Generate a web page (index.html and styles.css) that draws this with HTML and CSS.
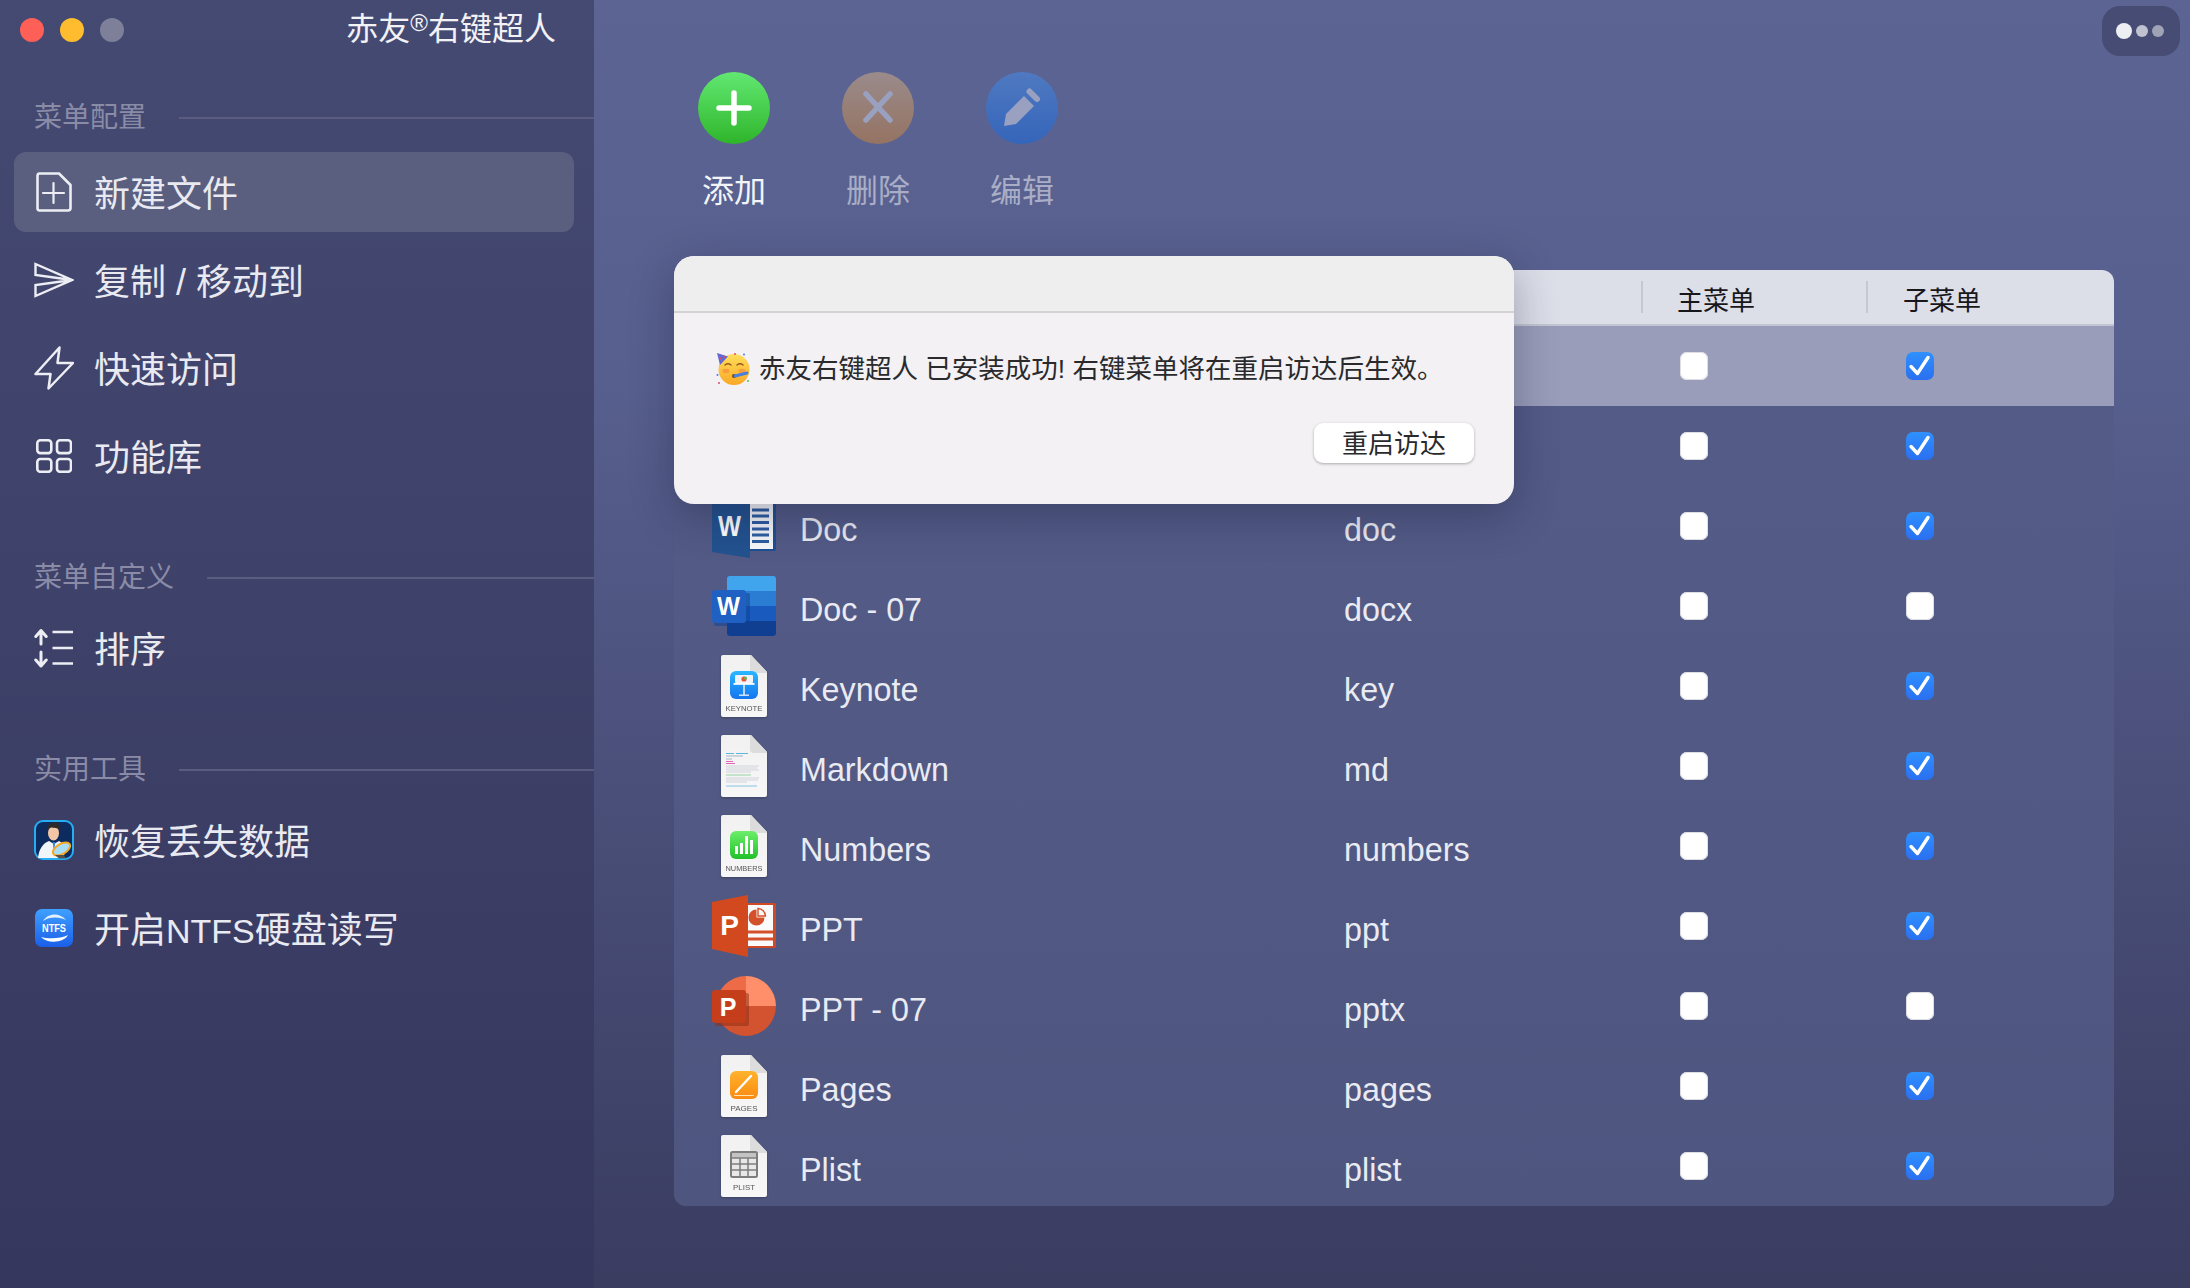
FILE: index.html
```html
<!DOCTYPE html>
<html lang="zh-CN">
<head>
<meta charset="utf-8">
<title>赤友右键超人</title>
<link rel="stylesheet" href="styles.css">
</head>
<body>
<svg class="defs" width="0" height="0" aria-hidden="true">
  <defs>
    <linearGradient id="pageFill" x1="0" y1="0" x2="0" y2="1"><stop offset="0" stop-color="#f1f1f1"/><stop offset="1" stop-color="#f7f7f7"/></linearGradient>
    <linearGradient id="kBlue" x1="0" y1="0" x2="0" y2="1"><stop offset="0" stop-color="#2ab8ff"/><stop offset="1" stop-color="#1474f0"/></linearGradient>
    <linearGradient id="nGreen" x1="0" y1="0" x2="0" y2="1"><stop offset="0" stop-color="#6cee6a"/><stop offset="1" stop-color="#22c12a"/></linearGradient>
    <linearGradient id="pOrange" x1="0" y1="0" x2="0" y2="1"><stop offset="0" stop-color="#ffb32c"/><stop offset="1" stop-color="#fb8a12"/></linearGradient>
    <linearGradient id="ntfsBlue" x1="0" y1="0" x2="0" y2="1"><stop offset="0" stop-color="#3fa0ff"/><stop offset="1" stop-color="#1a5fe8"/></linearGradient>
    <linearGradient id="faceFill" x1="0" y1="0" x2="0" y2="1"><stop offset="0" stop-color="#ffdf5c"/><stop offset="1" stop-color="#f9a825"/></linearGradient>
    <symbol id="page" viewBox="0 0 46 62">
      <path d="M2 0H30L46 17V60Q46 62 44 62H2Q0 62 0 60V2Q0 0 2 0Z" fill="url(#pageFill)"/>
      <path d="M29 0H30L46 17V18H33Q29 18 29 14Z" fill="#dcdcdc"/>
    </symbol>
    <symbol id="tick" viewBox="0 0 28 28">
      <path d="M5 14.5L11.5 21.5L22 5.5" fill="none" stroke="#fff" stroke-width="3.4" stroke-linecap="round" stroke-linejoin="round"/>
    </symbol>
  </defs>
</svg>
<div class="app">
  <aside class="sidebar">
    <div class="titlebar">
      <div class="lights">
        <span class="light light-red"></span>
        <span class="light light-yellow"></span>
        <span class="light light-gray"></span>
      </div>
      <div class="app-title">赤友<span class="reg">®</span>右键超人</div>
    </div>

    <section class="group group-first">
      <div class="group-label"><span class="group-text">菜单配置</span><i class="rule"></i></div>
      <nav class="nav">
        <a class="item item-active">
          <span class="item-icon">
            <svg width="36" height="40" viewBox="0 0 36 40" fill="none" stroke="#eceef4" stroke-width="2.600" stroke-linejoin="round" stroke-linecap="round"><path d="M3.500 1.500H23L34.500 13V36Q34.500 38.500 32 38.500H3.500Q1.500 38.500 1.500 36V4Q1.500 1.500 3.500 1.500Z"/><path d="M17.500 11V31M7 21H28" stroke-width="2.200"/></svg>
          </span>
          <span class="item-text">新建文件</span>
        </a>
        <a class="item">
          <span class="item-icon">
            <svg width="40" height="36" viewBox="0 0 40 36" fill="none" stroke="#eceef4" stroke-width="2.400" stroke-linejoin="miter"><path d="M1.500 2L38 18L1.500 34V23L38 18L1.500 13Z"/></svg>
          </span>
          <span class="item-text">复制 / 移动到</span>
        </a>
        <a class="item">
          <span class="item-icon">
            <svg width="40" height="44" viewBox="0 0 40 44" fill="none" stroke="#eceef4" stroke-width="2.500" stroke-linejoin="round"><path d="M25.500 1.500L1.500 28H16.500L14.500 42.500L39 17H23.500Z"/></svg>
          </span>
          <span class="item-text">快速访问</span>
        </a>
        <a class="item">
          <span class="item-icon">
            <svg width="36" height="34" viewBox="0 0 36 34" fill="none" stroke="#eceef4" stroke-width="2.600"><rect x="1.300" y="1.300" width="14" height="12.800" rx="3"/><rect x="21" y="1.300" width="14" height="12.800" rx="3"/><rect x="1.300" y="20" width="14" height="12.800" rx="3"/><rect x="21" y="20" width="14" height="12.800" rx="3"/></svg>
          </span>
          <span class="item-text">功能库</span>
        </a>
      </nav>
    </section>

    <section class="group">
      <div class="group-label"><span class="group-text">菜单自定义</span><i class="rule"></i></div>
      <nav class="nav">
        <a class="item">
          <span class="item-icon">
            <svg width="40" height="40" viewBox="0 0 40 40" fill="none" stroke="#eceef4" stroke-width="3" stroke-linecap="round" stroke-linejoin="round"><path d="M7 3V16M1.800 8.500L7 2.500L12.200 8.500M7 24V38M1.800 32L7 38L12.200 32"/><path d="M18.500 4H39M18.500 20H39M18.500 35.500H39" stroke-linecap="butt" stroke-width="2.400"/></svg>
          </span>
          <span class="item-text">排序</span>
        </a>
      </nav>
    </section>

    <section class="group">
      <div class="group-label"><span class="group-text">实用工具</span><i class="rule"></i></div>
      <nav class="nav">
        <a class="item">
          <span class="item-icon">
            <svg width="40" height="40" viewBox="0 0 40 40">
              <rect x="1" y="1" width="38" height="38" rx="8" fill="#0d2b5e" stroke="#25aef2" stroke-width="2"/>
              <path d="M4 38C5 29 9 23 15 21L20 24L25 21C29 23 32 26 33 30L28 38Z" fill="#f1f4f8"/>
              <path d="M18.800 22L20 33L21.200 22Z" fill="#2f7fd6"/>
              <ellipse cx="19.500" cy="13" rx="5.500" ry="7.500" fill="#f3c6a6"/>
              <path d="M13 12C11.500 5 17 1.500 22 2C27 2.500 27.500 8 26 11C24.500 7.500 21 8.500 18 7.500C15.500 7.500 14.500 9 13 12Z" fill="#2b2a2d"/>
              <ellipse cx="27.500" cy="29" rx="9.500" ry="5" transform="rotate(-30 27.500 29)" fill="#a9dcf5" stroke="#f5a623" stroke-width="2"/>
              <path d="M21 35L25 38.500H32L30 35Z" fill="#55504c"/>
            </svg>
          </span>
          <span class="item-text">恢复丢失数据</span>
        </a>
        <a class="item">
          <span class="item-icon">
            <svg width="38" height="38" viewBox="0 0 38 38">
              <rect width="38" height="38" rx="7" fill="url(#ntfsBlue)"/>
              <path d="M8 12C13 3.500 25 3.500 31 11C25 7.500 14 7.500 8 12Z" fill="#fff" opacity=".85"/>
              <text class="ntfs-text" x="19" y="22.500" text-anchor="middle" textLength="24" lengthAdjust="spacingAndGlyphs">NTFS</text>
              <path d="M6 28C12 30 26 30 33 26C29 34 12 35 6 28Z" fill="#fff"/>
            </svg>
          </span>
          <span class="item-text">开启<span class="latin-tight">NTFS</span>硬盘读写</span>
        </a>
      </nav>
    </section>
  </aside>

  <main class="main">
    <div class="topbar">
      <button class="more">
        <i class="dot dot-a"></i><i class="dot dot-b"></i><i class="dot dot-c"></i>
      </button>
    </div>

    <div class="toolbar">
      <div class="tool">
        <span class="tool-circle circle-add">
          <svg width="72" height="72" viewBox="0 0 72 72" fill="none" stroke="#fff" stroke-width="5.500" stroke-linecap="round"><path d="M36 21V51M21 36H51"/></svg>
        </span>
        <span class="tool-label">添加</span>
      </div>
      <div class="tool tool-off">
        <span class="tool-circle circle-del">
          <svg width="72" height="72" viewBox="0 0 72 72" fill="none" stroke="#9aa0c0" stroke-width="5.500" stroke-linecap="round"><path d="M24 22L48 48M48 22L24 48"/></svg>
        </span>
        <span class="tool-label">删除</span>
      </div>
      <div class="tool tool-off">
        <span class="tool-circle circle-edit">
          <svg width="72" height="72" viewBox="0 0 72 72"><path d="M18 54L20 42L38 24L48 34L30 52Z" fill="#9aa0c0"/><path d="M43.500 19.500L51 27" stroke="#9aa0c0" stroke-width="6" stroke-linecap="round"/></svg>
        </span>
        <span class="tool-label">编辑</span>
      </div>
    </div>

    <div class="table">
      <div class="row-head">
        <div></div><div></div>
        <div class="th">主菜单</div>
        <div class="th th-last">子菜单</div>
      </div>

      <div class="row row-selected">
        <div class="name"></div><div class="ext"></div>
        <div class="chk-cell"><span class="chk"></span></div>
        <div class="chk-cell chk-cell-last"><span class="chk chk-on"><svg width="28" height="28"><use href="#tick"/></svg></span></div>
      </div>
      <div class="row">
        <div class="name"></div><div class="ext"></div>
        <div class="chk-cell"><span class="chk"></span></div>
        <div class="chk-cell chk-cell-last"><span class="chk chk-on"><svg width="28" height="28"><use href="#tick"/></svg></span></div>
      </div>

      <div class="row">
        <div class="name">
          <span class="file-icon"><svg width="64" height="64" viewBox="0 0 64 64">
            <path d="M36 7H62Q64 7 64 9V55Q64 57 62 57H36Z" fill="#1f4f94"/>
            <rect x="38" y="9" width="23" height="46" fill="#f6f7fa"/>
            <path d="M40 16H57M40 22H57M40 28.500H57M40 35H57M40 41H57M40 47.500H57" stroke="#2d5da3" stroke-width="2.800"/>
            <path d="M0 7L38 0V64L0 58Z" fill="#23528f"/>
            <text class="office-letter letter-w" x="17.500" y="42" text-anchor="middle" textLength="23" lengthAdjust="spacingAndGlyphs">W</text>
          </svg></span>
          <span class="cell-text">Doc</span>
        </div>
        <div class="ext"><span class="cell-text">doc</span></div>
        <div class="chk-cell"><span class="chk"></span></div>
        <div class="chk-cell chk-cell-last"><span class="chk chk-on"><svg width="28" height="28"><use href="#tick"/></svg></span></div>
      </div>

      <div class="row">
        <div class="name">
          <span class="file-icon"><svg width="64" height="64" viewBox="0 0 64 64">
            <path d="M15 5Q15 2 18 2H61Q64 2 64 5V17H15Z" fill="#41a5ee"/>
            <rect x="15" y="17" width="49" height="15" fill="#2b7cd3"/>
            <rect x="15" y="32" width="49" height="15" fill="#185abd"/>
            <path d="M15 47H64V59Q64 62 61 62H18Q15 62 15 59Z" fill="#103f91"/>
            <rect x="2" y="19" width="36" height="33" rx="2" fill="#103f91" opacity=".5"/>
            <rect y="16" width="34" height="33" rx="3" fill="#1f60c2"/>
            <text class="office-letter letter-sm" x="16.500" y="41" text-anchor="middle" textLength="23" lengthAdjust="spacingAndGlyphs">W</text>
          </svg></span>
          <span class="cell-text">Doc - 07</span>
        </div>
        <div class="ext"><span class="cell-text">docx</span></div>
        <div class="chk-cell"><span class="chk"></span></div>
        <div class="chk-cell chk-cell-last"><span class="chk"></span></div>
      </div>

      <div class="row">
        <div class="name">
          <span class="file-icon"><svg class="page-svg" width="46" height="62" viewBox="0 0 46 62">
            <use href="#page"/>
            <rect x="9" y="16" width="28" height="28" rx="6" fill="url(#kBlue)"/>
            <rect x="14" y="20" width="18" height="8" rx="1" fill="#f0f3f6"/>
            <circle cx="23" cy="24" r="2.600" fill="#e8553e"/>
            <circle cx="24.500" cy="23" r="1.500" fill="#5bbf4a"/>
            <rect x="12.500" y="28" width="21" height="1.800" fill="#fff"/>
            <rect x="22.200" y="29" width="1.600" height="11" fill="#dfeafa"/>
            <rect x="18" y="39.500" width="10" height="1.400" fill="#dfeafa"/>
            <text class="page-label" x="23" y="55.500" text-anchor="middle" textLength="37" lengthAdjust="spacingAndGlyphs">KEYNOTE</text>
          </svg></span>
          <span class="cell-text">Keynote</span>
        </div>
        <div class="ext"><span class="cell-text">key</span></div>
        <div class="chk-cell"><span class="chk"></span></div>
        <div class="chk-cell chk-cell-last"><span class="chk chk-on"><svg width="28" height="28"><use href="#tick"/></svg></span></div>
      </div>

      <div class="row">
        <div class="name">
          <span class="file-icon"><svg class="page-svg" width="46" height="62" viewBox="0 0 46 62">
            <use href="#page"/>
            <path d="M5 18.500H13M15 18.500H27" stroke="#35a8d8" stroke-width=".8"/>
            <path d="M5 21H22M5 24H11" stroke="#8a9bb0" stroke-width=".7"/>
            <path d="M5 26.500H12M5 28.500H14" stroke="#e23fa5" stroke-width=".8"/>
            <path d="M5 31H38M5 33H36M5 35H38M5 37H30" stroke="#c2c5ce" stroke-width=".7"/>
            <path d="M5 40H30" stroke="#7fc98a" stroke-width=".8"/>
            <path d="M5 43H38M5 45H37M5 47H26" stroke="#c2c5ce" stroke-width=".7"/>
            <path d="M5 51H36" stroke="#6fb8e0" stroke-width=".8"/>
          </svg></span>
          <span class="cell-text">Markdown</span>
        </div>
        <div class="ext"><span class="cell-text">md</span></div>
        <div class="chk-cell"><span class="chk"></span></div>
        <div class="chk-cell chk-cell-last"><span class="chk chk-on"><svg width="28" height="28"><use href="#tick"/></svg></span></div>
      </div>

      <div class="row">
        <div class="name">
          <span class="file-icon"><svg class="page-svg" width="46" height="62" viewBox="0 0 46 62">
            <use href="#page"/>
            <rect x="9" y="16" width="28" height="28" rx="6" fill="url(#nGreen)"/>
            <path d="M14 31h3v8h-3zM19 28h3v11h-3zM24 21h3v18h-3zM29 25h3v14h-3z" fill="#fff"/>
            <text class="page-label" x="23" y="55.500" text-anchor="middle" textLength="37" lengthAdjust="spacingAndGlyphs">NUMBERS</text>
          </svg></span>
          <span class="cell-text">Numbers</span>
        </div>
        <div class="ext"><span class="cell-text">numbers</span></div>
        <div class="chk-cell"><span class="chk"></span></div>
        <div class="chk-cell chk-cell-last"><span class="chk chk-on"><svg width="28" height="28"><use href="#tick"/></svg></span></div>
      </div>

      <div class="row">
        <div class="name">
          <span class="file-icon"><svg width="64" height="64" viewBox="0 0 64 64">
            <path d="M36 9H62Q64 9 64 11V52Q64 54 62 54H36Z" fill="#cf4a24"/>
            <rect x="36" y="11" width="25" height="41" fill="#fafafa"/>
            <path d="M44.500 15.500A8 8 0 1 0 52.500 23.500H44.500Z" fill="#d4502a"/>
            <path d="M46 14.500A8 8 0 0 1 53.500 22H46Z" fill="none" stroke="#d4502a" stroke-width="1.400"/>
            <path d="M36 38H61M36 45H61" stroke="#d4502a" stroke-width="2.800"/>
            <path d="M0 8L36 1V63L0 55Z" fill="#d2491f"/>
            <text class="office-letter letter-p" x="17.500" y="41" text-anchor="middle">P</text>
          </svg></span>
          <span class="cell-text">PPT</span>
        </div>
        <div class="ext"><span class="cell-text">ppt</span></div>
        <div class="chk-cell"><span class="chk"></span></div>
        <div class="chk-cell chk-cell-last"><span class="chk chk-on"><svg width="28" height="28"><use href="#tick"/></svg></span></div>
      </div>

      <div class="row">
        <div class="name">
          <span class="file-icon"><svg width="64" height="64" viewBox="0 0 64 64">
            <path d="M34 32V2A30 30 0 0 0 4 32Z" fill="#ed6c47"/>
            <path d="M34 32V2A30 30 0 0 1 64 32Z" fill="#ff8f6b"/>
            <path d="M4 32A30 30 0 0 0 64 32Z" fill="#d35230"/>
            <rect x="3" y="19" width="34" height="33" rx="2" fill="#8f2f16" opacity=".55"/>
            <rect y="16" width="34" height="33" rx="3" fill="#c43e1c"/>
            <text class="office-letter letter-sm" x="16" y="42" text-anchor="middle">P</text>
          </svg></span>
          <span class="cell-text">PPT - 07</span>
        </div>
        <div class="ext"><span class="cell-text">pptx</span></div>
        <div class="chk-cell"><span class="chk"></span></div>
        <div class="chk-cell chk-cell-last"><span class="chk"></span></div>
      </div>

      <div class="row">
        <div class="name">
          <span class="file-icon"><svg class="page-svg" width="46" height="62" viewBox="0 0 46 62">
            <use href="#page"/>
            <rect x="9" y="16" width="28" height="28" rx="6" fill="url(#pOrange)"/>
            <path d="M15 37L30 21" stroke="#fff" stroke-width="2.400" stroke-linecap="round"/>
            <path d="M13 40.500H33" stroke="#ffe3b0" stroke-width="1"/>
            <text class="page-label" x="23" y="55.500" text-anchor="middle" textLength="27" lengthAdjust="spacingAndGlyphs">PAGES</text>
          </svg></span>
          <span class="cell-text">Pages</span>
        </div>
        <div class="ext"><span class="cell-text">pages</span></div>
        <div class="chk-cell"><span class="chk"></span></div>
        <div class="chk-cell chk-cell-last"><span class="chk chk-on"><svg width="28" height="28"><use href="#tick"/></svg></span></div>
      </div>

      <div class="row">
        <div class="name">
          <span class="file-icon"><svg class="page-svg" width="46" height="62" viewBox="0 0 46 62">
            <use href="#page"/>
            <rect x="10" y="17" width="26" height="25" rx="1.500" fill="#e8e8e8" stroke="#7d7d7d" stroke-width="2"/>
            <path d="M10 23H36M10 29H36M10 35H36M19 23V42M27 23V42" stroke="#7d7d7d" stroke-width="1.500"/>
            <rect x="10" y="17" width="26" height="6" fill="#7d7d7d" opacity=".35"/>
            <text class="page-label" x="23" y="55" text-anchor="middle" textLength="22" lengthAdjust="spacingAndGlyphs">PLIST</text>
          </svg></span>
          <span class="cell-text">Plist</span>
        </div>
        <div class="ext"><span class="cell-text">plist</span></div>
        <div class="chk-cell"><span class="chk"></span></div>
        <div class="chk-cell chk-cell-last"><span class="chk chk-on"><svg width="28" height="28"><use href="#tick"/></svg></span></div>
      </div>
    </div>

    <div class="dialog">
      <div class="dialog-head"></div>
      <div class="dialog-body">
        <p class="dialog-msg">
          <svg class="emoji" width="35" height="32" viewBox="0 0 35 32">
            <circle cx="18" cy="16.500" r="15.500" fill="url(#faceFill)"/>
            <path d="M1 0L12 3.500L4 12Z" fill="#5b6bd6"/>
            <path d="M3 3L6 8M7 2L9 5" stroke="#e14a6b" stroke-width="1.200"/>
            <path d="M9 12Q12 9.500 15 12M21 12Q24 9.500 27 12" fill="none" stroke="#9a5a1e" stroke-width="1.500" stroke-linecap="round"/>
            <ellipse cx="10" cy="18" rx="3.500" ry="2.200" fill="#f58f3c" opacity=".7"/>
            <ellipse cx="26" cy="18" rx="3.500" ry="2.200" fill="#f58f3c" opacity=".7"/>
            <circle cx="18" cy="23" r="2" fill="#7a4417"/>
            <path d="M19 23L31 20" stroke="#4a7fe0" stroke-width="3" stroke-linecap="round"/>
            <circle cx="1.500" cy="22" r="1" fill="#4a7fe0"/><circle cx="28" cy="1.500" r="1" fill="#4a7fe0"/><circle cx="19" cy="1" r="1" fill="#e14a6b"/><circle cx="3" cy="30" r="1" fill="#e14a6b"/><circle cx="32" cy="28" r="1" fill="#5bbf4a"/>
          </svg>
          <span class="msg-text">赤友右键超人 已安装成功! 右键菜单将在重启访达后生效。</span>
        </p>
        <div class="dialog-actions"><button class="dialog-btn">重启访达</button></div>
      </div>
    </div>
  </main>
</div>
</body>
</html>
```

FILE: styles.css
```css
* { box-sizing: border-box; }
html, body { margin: 0; padding: 0; }
body {
  width: 2190px;
  height: 1288px;
  overflow: hidden;
  font-family: "Liberation Sans", "Noto Sans CJK SC", sans-serif;
}
.defs { display: block; }

.app { display: flex; width: 2190px; height: 1288px; }

/* Sidebar */
.sidebar {
  width: 594px;
  flex: none;
  background: linear-gradient(#454a72, #36375e);
  color: #e9eaf1;
}
.titlebar { display: flex; align-items: center; height: 60px; padding: 0 38px 0 20px; }
.lights { display: flex; gap: 16px; }
.light { width: 24px; height: 24px; border-radius: 50%; }
.light-red { background: #fe5f57; }
.light-yellow { background: #febc2e; }
.light-gray { background: #7e8099; }
.app-title { margin-left: auto; padding-bottom: 2px; font-size: 32px; line-height: 40px; color: #f1f1f6; }
.reg { font-size: 24px; vertical-align: 9px; line-height: 0; }

.group { margin-top: 60px; }
.group-first { margin-top: 36px; }
.group-label {
  display: flex;
  align-items: center;
  gap: 33px;
  height: 40px;
  padding-left: 34px;
  margin-bottom: 12px;
  font-size: 28px;
  color: #8a8ca7;
}
.group-text { padding-bottom: 3px; }
.group-first .group-label { margin-bottom: 16px; }
.rule { flex: 1; height: 2px; margin-top: 4px; background: #5a5d80; }

.nav { display: flex; flex-direction: column; gap: 8px; }
.item {
  display: flex;
  align-items: center;
  gap: 20px;
  width: 560px;
  height: 80px;
  margin-left: 14px;
  padding-left: 20px;
  border-radius: 12px;
  font-size: 36px;
  color: #e9eaf1;
}
.item-text { padding-bottom: 2px; }
.latin-tight { font-size: 34px; }
.item-active { background: #5a5f80; }
.item-icon { display: flex; align-items: center; justify-content: center; width: 40px; flex: none; }
.ntfs-text { font-family: "Liberation Sans", sans-serif; font-weight: 700; font-size: 10px; fill: #fff; }

/* Main */
.main {
  position: relative;
  flex: 1;
  background: linear-gradient(#5b6493 0%, #575f8e 30%, #3a3c60 100%);
}
.topbar { display: flex; justify-content: flex-end; height: 72px; padding: 6px 10px 0 0; }
.more {
  display: flex;
  align-items: center;
  gap: 4px;
  width: 78px;
  height: 50px;
  padding: 0 0 0 14px;
  border: 0;
  border-radius: 18px;
  background: #464c74;
}
.dot { display: block; border-radius: 50%; }
.dot-a { width: 16px; height: 16px; background: #eeeff3; }
.dot-b { width: 12px; height: 12px; background: #c0c2d0; }
.dot-c { width: 12px; height: 12px; background: #a0a2b5; }

.toolbar { display: flex; gap: 72px; padding-left: 104px; }
.tool { display: flex; flex-direction: column; align-items: center; width: 72px; color: #f3f4f8; }
.tool-off { color: #a9adc5; }
.tool-circle { display: block; width: 72px; height: 72px; border-radius: 50%; }
.tool-circle svg { display: block; }
.circle-add { background: linear-gradient(#62e872, #2fb52a); }
.circle-del { background: linear-gradient(#9a8b8b, #957362); }
.circle-edit { background: linear-gradient(#4f79c1, #3565ba); }
.tool-label { margin-top: 25px; font-size: 32px; line-height: 44px; white-space: nowrap; }

.table {
  width: 1440px;
  margin: 57px 0 0 80px;
  border-radius: 12px;
  overflow: hidden;
  background: linear-gradient(#545c88, #4e5680);
}
.row-head, .row {
  display: grid;
  grid-template-columns: 670px 297px 225px 248px;
  align-items: center;
}
.row-head {
  height: 56px;
  background: #dcdee8;
  border-bottom: 2px solid #c3c5d2;
}
.th {
  height: 32px;
  padding-left: 34px;
  border-left: 2px solid #c5c7d3;
  font-size: 26px;
  line-height: 41px;
  color: #17171c;
}
.th-last { padding-left: 35px; }
.row { height: 80px; font-size: 32.300px; color: #e9eaf2; }
.row-selected { background: #999db9; }
.name { display: flex; align-items: center; padding-left: 38px; }
.ext { display: flex; align-items: center; }
.cell-text { padding-top: 9px; }
.file-icon { display: flex; align-items: center; justify-content: center; width: 64px; height: 64px; margin-right: 24px; flex: none; }
.page-svg { filter: drop-shadow(0 1px 1px rgba(0, 0, 0, .25)); }
.page-label { font-family: "Liberation Sans", sans-serif; font-size: 7.500px; fill: #555; }
.office-letter { font-family: "Liberation Sans", sans-serif; font-weight: 700; fill: #fff; }
.letter-w { font-size: 29px; }
.letter-sm { font-size: 25px; }
.letter-p { font-size: 28px; }
.chk-cell { padding-left: 39px; }
.chk-cell-last { padding-left: 40px; }
.chk {
  display: block;
  width: 28px;
  height: 28px;
  border-radius: 7px;
  background: #fff;
  box-shadow: inset 0 0 0 1px #dddde2;
}
.chk svg { display: block; }
.chk-on { background: linear-gradient(#2f91ff, #2a6ff0); box-shadow: none; }

/* Alert dialog */
.dialog {
  position: absolute;
  left: 80px;
  top: 256px;
  display: flex;
  flex-direction: column;
  width: 840px;
  height: 248px;
  border-radius: 20px;
  overflow: hidden;
  background: #f3f1f4;
  box-shadow: 0 12px 44px rgba(20, 22, 50, .32);
}
.dialog-head { height: 57px; flex: none; background: #eeeeee; border-bottom: 2px solid #d3d3d5; }
.dialog-body { flex: 1; display: flex; flex-direction: column; padding: 38px 40px 0 42px; }
.dialog-msg {
  display: flex;
  align-items: center;
  gap: 8px;
  height: 36px;
  margin: 0;
  font-size: 26.500px;
  color: #2a2a2d;
  white-space: nowrap;
}
.msg-text { padding-bottom: 6px; }
.emoji { flex: none; }
.dialog-actions { display: flex; justify-content: flex-end; margin-top: 36px; }
.dialog-btn {
  width: 160px;
  height: 40px;
  padding: 0;
  border: 0;
  border-radius: 9px;
  background: #fff;
  box-shadow: 0 1px 3px rgba(0, 0, 0, .3);
  font-family: "Liberation Sans", "Noto Sans CJK SC", sans-serif;
  font-size: 26px;
  line-height: 42px;
  color: #2a2a2d;
}
```
